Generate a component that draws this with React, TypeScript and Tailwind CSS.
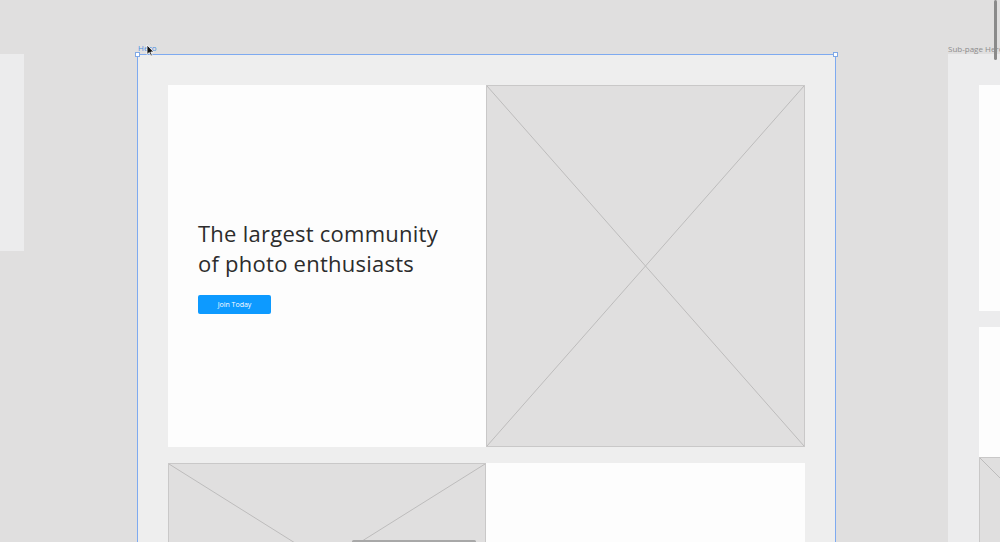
import React from "react";

function Placeholder({ className = "" }: { className?: string }) {
  return (
    <div className={`relative bg-[#e0dfdf] border border-[#c9c8c8] ${className}`}>
      <svg className="absolute inset-0 w-full h-full" preserveAspectRatio="none" viewBox="0 0 100 100">
        <line x1="0" y1="0" x2="100" y2="100" stroke="#bdbcbc" strokeWidth="1" vectorEffect="non-scaling-stroke" />
        <line x1="100" y1="0" x2="0" y2="100" stroke="#bdbcbc" strokeWidth="1" vectorEffect="non-scaling-stroke" />
      </svg>
    </div>
  );
}

export default function App() {
  const font = { fontFamily: '"Open Sans", "Liberation Sans", sans-serif' };
  return (
    <div className="relative w-[1000px] h-[542px] overflow-hidden bg-[#e0dfdf]" style={font}>
      {/* left partial frame */}
      <div className="absolute left-0 top-[54px] w-[24px] h-[197px] bg-[#ececed]" />

      {/* main Hero frame */}
      <div className="absolute left-[137px] top-[54px] w-[699px] h-[520px] bg-[#eeeeee] border border-[#7eaaf0]">
        <div className="grid grid-cols-[318px_319px] grid-rows-[362px_200px] gap-y-[16px] px-[30px] pt-[30px]">
          <div className="bg-[#fdfdfd] flex flex-col justify-center pl-[30px] pb-[30px]">
            <h1 className="text-[22px] leading-[30px] text-[#2c2c2c] font-normal tracking-[0.25px] mt-[30px]">
              The largest community
              <br />
              of photo enthusiasts
            </h1>
            <button className="mt-[17px] w-[73px] h-[19px] rounded-[2px] bg-[#0d9aff] text-white text-[7px] leading-none flex items-center justify-center">
              Join Today
            </button>
          </div>
          <Placeholder />
          <Placeholder />
          <div className="bg-[#fdfdfd]" />
        </div>
      </div>
      <div className="absolute left-[135px] top-[52px] w-[5px] h-[5px] bg-white border border-[#7fa8e6]" />
      <div className="absolute left-[833px] top-[52px] w-[5px] h-[5px] bg-white border border-[#7fa8e6]" />
      <div className="absolute left-[138px] top-[43px] text-[8px] leading-[10px] text-[#4a8de0]">Hero</div>

      {/* right frame */}
      <div className="absolute left-[948px] top-[44px] w-[52px] overflow-hidden text-[8px] leading-[10px] text-[#8e8d8d] whitespace-nowrap">Sub-page Hero</div>
      <div className="absolute left-[948px] top-[54px] w-[80px] h-[600px] bg-[#ececed] pl-[31px] pt-[31px] flex flex-col">
        <div className="shrink-0 h-[226px] bg-[#fdfdfd]" />
        <div className="shrink-0 h-[130px] mt-[16px] bg-[#fdfdfd]" />
        <Placeholder className="shrink-0 h-[160px] w-[160px]" />
      </div>

      {/* scrollbars */}
      <div className="absolute left-[994px] top-0 w-[3px] h-[60px] rounded-full bg-[#8a8a8a]" />
      <div className="absolute left-[352px] top-[540px] w-[124px] h-[3px] rounded-full bg-[#a8a8a8]" />

      {/* cursor */}
      <svg className="absolute left-[146px] top-[44px]" width="9" height="13" viewBox="0 0 9 13">
        <path d="M1 1 L1 10.5 L3.3 8.5 L4.9 12 L6.3 11.4 L4.8 8 L7.8 8 Z" fill="#111" stroke="#fff" strokeWidth="0.8" />
      </svg>
    </div>
  );
}
